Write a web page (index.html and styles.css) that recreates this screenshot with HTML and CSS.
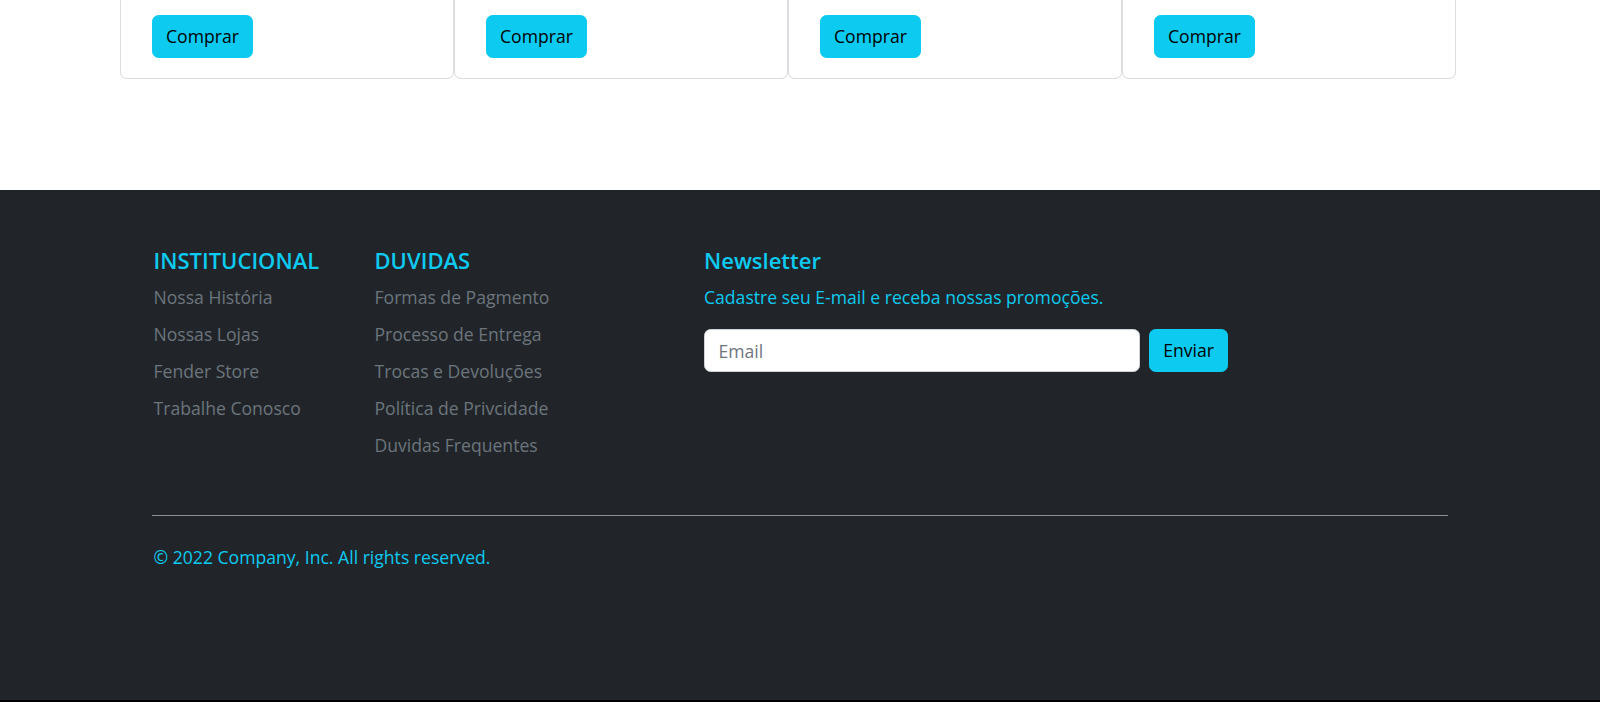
FILE: index.html
```html
<!DOCTYPE html>
<html lang="pt-BR">
<head>
<meta charset="utf-8">
<title>Loja</title>
<link rel="stylesheet" href="styles.css">
</head>
<body>
<section class="products">
  <div class="cards">
    <div class="card"><button class="btn btn-info">Comprar</button></div>
    <div class="card"><button class="btn btn-info">Comprar</button></div>
    <div class="card"><button class="btn btn-info">Comprar</button></div>
    <div class="card"><button class="btn btn-info">Comprar</button></div>
  </div>
</section>
<footer class="footer">
  <div class="container">
    <div class="cols">
      <div class="col col-link">
        <h5 class="col-title">INSTITUCIONAL</h5>
        <ul class="links">
          <li><a href="#">Nossa História</a></li>
          <li><a href="#">Nossas Lojas</a></li>
          <li><a href="#">Fender Store</a></li>
          <li><a href="#">Trabalhe Conosco</a></li>
        </ul>
      </div>
      <div class="col col-link">
        <h5 class="col-title">DUVIDAS</h5>
        <ul class="links">
          <li><a href="#">Formas de Pagmento</a></li>
          <li><a href="#">Processo de Entrega</a></li>
          <li><a href="#">Trocas e Devoluções</a></li>
          <li><a href="#">Política de Privcidade</a></li>
          <li><a href="#">Duvidas Frequentes</a></li>
        </ul>
      </div>
      <div class="col col-news">
        <h5 class="col-title">Newsletter</h5>
        <p class="news-text">Cadastre seu E-mail e receba nossas promoções.</p>
        <form class="news-form">
          <input class="input" type="text" placeholder="Email">
          <button class="btn btn-info" type="button">Enviar</button>
        </form>
      </div>
    </div>
    <div class="bottom">
      <p class="copy">© 2022 Company, Inc. All rights reserved.</p>
    </div>
  </div>
</footer>
<div class="edge"></div>
</body>
</html>
```
FILE: styles.css
```css
* { box-sizing: border-box; }

html, body {
  margin: 0;
  padding: 0;
}

body {
  font-family: "Open Sans", "Noto Sans", sans-serif;
  font-size: 17.6px;
  line-height: 1.5;
  color: #212529;
  background: #fff;
}

.products {
  height: 190px;
}

.cards {
  display: grid;
  grid-template-columns: repeat(4, 334px);
  margin-left: 120px;
}

.card {
  border: 1px solid #dcdde0;
  border-top: 0;
  border-radius: 0 0 6.6px 6.6px;
  padding: 15px 31px 19px;
  height: 79px;
}

.btn {
  font-family: inherit;
  font-size: 17.6px;
  line-height: 27px;
  padding: 7px 13px;
  border: 1px solid transparent;
  border-radius: 6.6px;
  cursor: pointer;
}

.btn-info {
  background: #0dcaf0;
  border-color: #0dcaf0;
  color: #000;
}

.footer {
  background: #212529;
  height: 510px;
  padding-top: 57px;
}

.container {
  width: 1296px;
  margin: 0 auto;
}

.cols {
  display: grid;
  grid-template-columns: 221px 221px 110px 524px;
}

.col-link {
  padding-left: 1.5px;
}

.col-news {
  grid-column: 4;
}

.col-title {
  margin: 0 0 11px;
  font-size: 22px;
  line-height: 26px;
  font-weight: 600;
  color: #0dcaf0;
}

.links {
  list-style: none;
  margin: 0;
  padding: 0;
}

.links li {
  line-height: 27px;
  margin-bottom: 10px;
}

.links a {
  color: #6c757d;
  text-decoration: none;
}

.news-text {
  margin: 0 0 18px;
  line-height: 27px;
  color: #0dcaf0;
}

.news-form {
  display: flex;
  gap: 9px;
}

.input {
  flex: 1;
  height: 43px;
  font-family: inherit;
  font-size: 17.6px;
  padding: 6px 13.5px;
  border: 1px solid #ced4da;
  border-radius: 6.6px;
  background: #fff;
  color: #212529;
}

.input::placeholder {
  color: #6c757d;
}

.news-form .btn {
  height: 43px;
  padding: 7px 13px;
}

.bottom {
  margin-top: 46px;
  border-top: 1px solid #8e9194;
  padding-top: 28px;
}

.copy {
  margin: 0;
  padding-left: 1.5px;
  line-height: 27px;
  color: #0dcaf0;
}

.edge {
  height: 2px;
  background: #000;
}
```
